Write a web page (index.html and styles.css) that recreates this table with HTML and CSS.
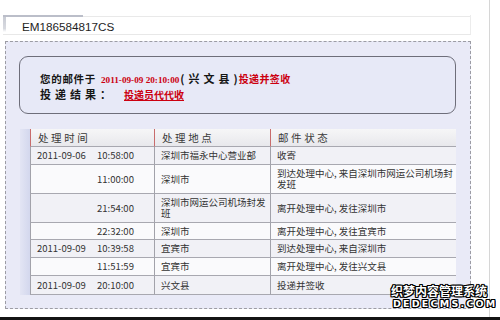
FILE: index.html
```html
<!DOCTYPE html>
<html lang="zh-CN">
<head>
<meta charset="utf-8">
<title>EM186584817CS</title>
<link rel="stylesheet" href="styles.css">
</head>
<body>
<div class="frame">
  <div class="title">EM186584817CS</div>
  <div class="panel">
    <div class="info">
      <div class="line"><span class="lbl">您的邮件于</span><span class="date">2011-09-09 20:10:00</span><span class="place">(兴文县)</span><span class="red">投递并签收</span></div>
      <div class="line"><span class="lbl2">投递结果：</span><span class="link">投递员代代收</span></div>
    </div>
    <div class="tablewrap">
      <div class="band"></div>
      <table class="track">
        <colgroup><col class="c1"><col class="c2"><col class="c3"></colgroup>
        <thead>
          <tr><th>处理时间</th><th>处理地点</th><th>邮件状态</th></tr>
        </thead>
        <tbody>
          <tr class="odd"><td><span class="d">2011-09-06</span>10:58:00</td><td>深圳市福永中心营业部</td><td>收寄</td></tr>
          <tr class="even tall"><td><span class="d"></span>11:00:00</td><td>深圳市</td><td>到达处理中心, 来自深圳市网运公司机场封发班</td></tr>
          <tr class="odd tall"><td><span class="d"></span>21:54:00</td><td>深圳市网运公司机场封发班</td><td>离开处理中心, 发往深圳市</td></tr>
          <tr class="even short"><td><span class="d"></span>22:32:00</td><td>深圳市</td><td>离开处理中心, 发往宜宾市</td></tr>
          <tr class="odd"><td><span class="d">2011-09-09</span>10:39:58</td><td>宜宾市</td><td>到达处理中心, 来自深圳市</td></tr>
          <tr class="even"><td><span class="d"></span>11:51:59</td><td>宜宾市</td><td>离开处理中心, 发往兴文县</td></tr>
          <tr class="odd last"><td><span class="d">2011-09-09</span>20:10:00</td><td>兴文县</td><td>投递并签收</td></tr>
        </tbody>
      </table>
    </div>
  </div>
</div>
<div class="bottombar"></div>
<div class="watermark">
  <div class="wm1">织梦内容管理系统</div>
  <div class="wm2">DEDECMS.COM</div>
</div>
</body>
</html>
```

FILE: styles.css
```css
html, body {
  margin: 0;
  padding: 0;
}
body {
  width: 500px;
  height: 320px;
  overflow: hidden;
  background: #fff;
  position: relative;
  font-family: "Noto Sans CJK SC", "Liberation Sans", sans-serif;
}
.frame {
  width: 490px;
  height: 317px;
  box-sizing: border-box;
  border-right: 1px solid #d6d6d6;
  padding-top: 15px;
  overflow: hidden;
}
.bottombar {
  height: 3px;
  background: #141414;
}
.title {
  margin-left: 3px;
  width: 468px;
  height: 20px;
  box-sizing: border-box;
  padding: 4px 0 0 19px;
  line-height: 15px;
  border-right: 1px solid #ececec;
  border-bottom: 1px solid #e8e8e8;
  background:
    linear-gradient(#bbbec9, #bbbec9) 0 0 / 80px 2px no-repeat,
    linear-gradient(#c6c9d2, #d8dae0 80%, #fff) 0 0 / 3px 17px no-repeat,
    linear-gradient(#e9e9e9, #e9e9e9) 0 1px / 100% 1px no-repeat,
    #fff;
  font-family: "Liberation Sans", Arial, sans-serif;
  font-size: 11.7px;
  color: #1e1e1e;
}
.panel {
  margin: 6px 0 0 5px;
  width: 466px;
  height: 268px;
  box-sizing: border-box;
  border: 1px dashed #9c9ca4;
  background: #e9eaf7;
  padding: 14px 0 0 13px;
}
.info {
  width: 437px;
  height: 58px;
  box-sizing: border-box;
  border: 1px solid #6e6e7a;
  border-radius: 9px;
  background: #e7e9f7;
  padding: 11px 0 0 20px;
}
.line {
  height: 16px;
  line-height: 16px;
  white-space: nowrap;
  color: #161616;
}
.lbl {
  font-weight: bold;
  font-size: 10.5px;
  letter-spacing: 0.7px;
}
.lbl2 {
  font-weight: bold;
  font-size: 11px;
  letter-spacing: 4px;
}
.date {
  margin-left: 5px;
  font-family: "Liberation Serif", "Times New Roman", serif;
  font-weight: bold;
  font-size: 9.2px;
  color: #cc0010;
}
.place {
  margin-left: 1px;
  font-weight: bold;
  font-size: 11px;
  letter-spacing: 4px;
}
.red {
  margin-left: -3px;
  font-weight: bold;
  font-size: 10px;
  letter-spacing: 0.4px;
  color: #cc0010;
}
.link {
  margin-left: 9px;
  font-weight: bold;
  font-size: 10px;
  color: #cc0010;
  text-decoration: underline;
}
.tablewrap {
  display: flex;
  margin: 15px 0 0 1px;
}
.band {
  width: 10px;
  background: linear-gradient(to right, #e3e5f4, #d3d7ed);
}
.track {
  width: 426px;
  table-layout: fixed;
  border-collapse: separate;
  border-spacing: 0;
  font-size: 9.5px;
  line-height: 11px;
  color: #333;
}
.c1 { width: 124px; }
.c2 { width: 116px; }
.c3 { width: 186px; }
.track th {
  height: 17px;
  padding: 0 0 0 7px;
  text-align: left;
  font-weight: normal;
  font-size: 10.5px;
  letter-spacing: 2.6px;
  color: #3a3a3a;
  background: linear-gradient(#f6f6f7, #e8e8ec);
  border-left: 1px solid #c86c6c;
  border-bottom: 1px solid #a8a8b0;
  vertical-align: middle;
}
.track td {
  height: 17px;
  padding: 0 2px 0 6px;
  border-left: 1px solid #a2a2aa;
  border-bottom: 1px solid #a8a8b0;
  vertical-align: middle;
  white-space: normal;
}
.track tr.tall td { height: 28px; }
.track tr.short td { height: 16px; }
.track tr.last td { height: 18px; }
.track tr.odd td { background: #f1f1f6; }
.track tr.even td { background: #fafafc; }
.d {
  display: inline-block;
  width: 60px;
}
.watermark {
  position: absolute;
  left: 391px;
  top: 284px;
  color: #fff;
  font-weight: bold;
  text-shadow:
    1px 0 0 #000, -1px 0 0 #000, 0 1px 0 #000, 0 -1px 0 #000,
    1px 1px 0 #000, -1px -1px 0 #000, 1px -1px 0 #000, -1px 1px 0 #000;
}
.wm1 {
  font-size: 12px;
  line-height: 14px;
  letter-spacing: 0;
}
.wm2 {
  font-family: "DejaVu Sans", sans-serif;
  font-size: 9.5px;
  line-height: 12px;
  letter-spacing: 2.2px;
  padding-left: 2px;
}
```
